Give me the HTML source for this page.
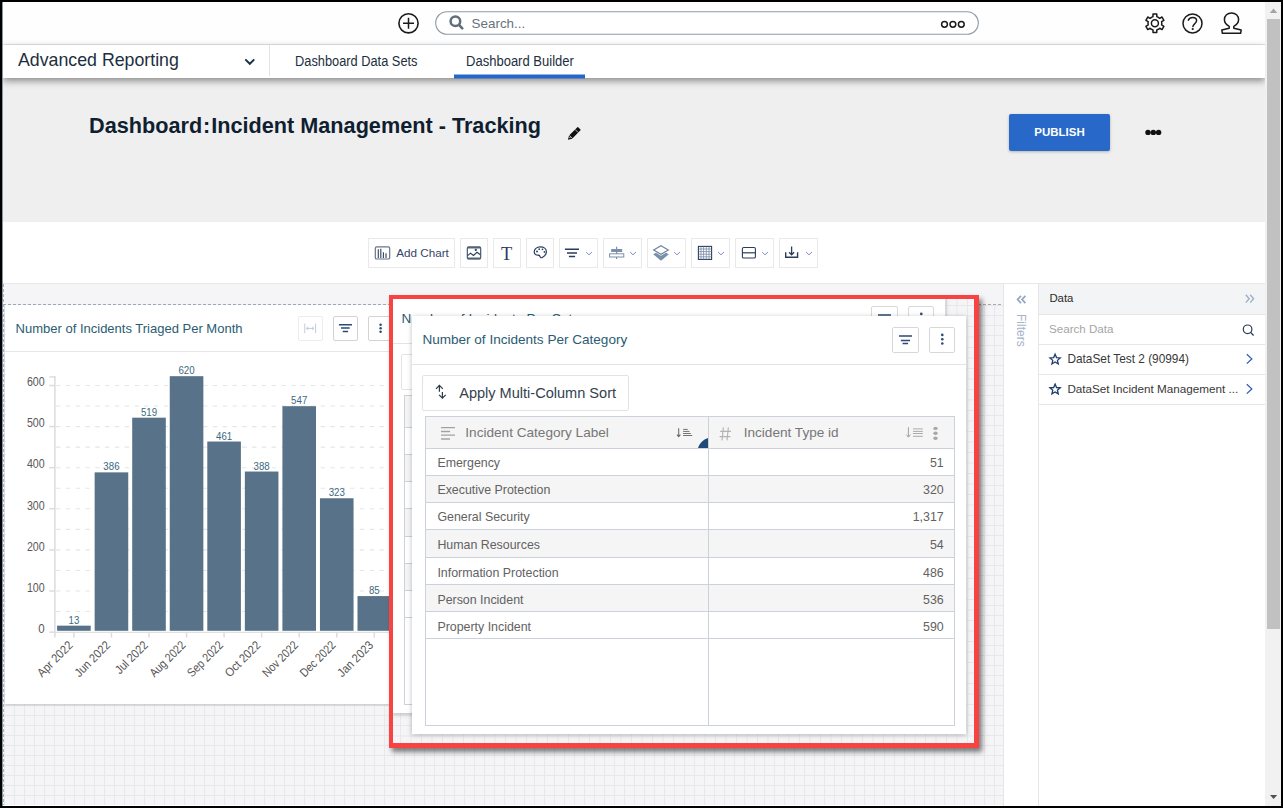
<!DOCTYPE html>
<html><head><meta charset="utf-8">
<style>
*{box-sizing:border-box;margin:0;padding:0}
html,body{width:1283px;height:808px;overflow:hidden;background:#000}
body{position:relative;font-family:"Liberation Sans",sans-serif}
.a{position:absolute}
.t{position:absolute;white-space:nowrap;line-height:1}
svg{position:absolute;overflow:visible}
</style></head><body>
<!-- page area -->
<div class="a" style="left:2px;top:2px;width:1279px;height:804px;background:#fff"></div>
<div class="a" style="left:2px;top:2px;width:1px;height:804px;background:#8497a6;z-index:20"></div>

<!-- top header -->
<div class="a" style="left:3px;top:2px;width:1262px;height:43px;background:#fefefe;border-bottom:1px solid #e2e6e9"></div>


<!-- header content -->
<svg style="left:0;top:0" width="1283" height="45">
 <circle cx="408.5" cy="23.3" r="9.6" fill="none" stroke="#1a1a1a" stroke-width="1.6"/>
 <path d="M403 23.3H414M408.5 17.8V28.8" stroke="#1a1a1a" stroke-width="1.5"/>
 <rect x="435.7" y="11.7" width="542.6" height="22.6" rx="11.3" fill="#fff" stroke="#8f9aa3" stroke-width="1.1"/>
 <circle cx="455.4" cy="21.3" r="4.8" fill="none" stroke="#5f6e7a" stroke-width="2.5"/>
 <path d="M459.2 25.1L462.3 28.4" stroke="#5f6e7a" stroke-width="2.6" stroke-linecap="round"/>
 <circle cx="944.5" cy="24.3" r="2.9" fill="none" stroke="#1a1a1a" stroke-width="1.5"/>
 <circle cx="952.9" cy="24.3" r="2.9" fill="none" stroke="#1a1a1a" stroke-width="1.5"/>
 <circle cx="961.3" cy="24.3" r="2.9" fill="none" stroke="#1a1a1a" stroke-width="1.5"/>
 <circle cx="1192.5" cy="23.4" r="9.5" fill="none" stroke="#1a1a1a" stroke-width="1.5"/>
 <path d="M1188.3 20.2C1189.3 18.2 1190.8 17.6 1192.6 17.6C1195 17.6 1196.6 19 1196.6 20.8C1196.6 22.9 1193.4 24 1192.9 26.6" fill="none" stroke="#1a1a1a" stroke-width="1.5" stroke-linecap="round"/>
 <circle cx="1192.7" cy="29" r="1.1" fill="#1a1a1a"/>
 <path d="M1229.2 26.3C1226.4 24.9 1224.4 22.3 1224.4 19.6C1224.4 15.8 1227.5 12.9 1231.5 12.9C1235.5 12.9 1238.6 15.8 1238.6 19.6C1238.6 22.3 1236.6 24.9 1233.8 26.3V28.2L1241.2 29.9L1240.6 33.3H1222.4L1221.8 29.9L1229.2 28.2Z" fill="none" stroke="#1a1a1a" stroke-width="1.5" stroke-linejoin="round"/>
 <path id="gear" fill="none" stroke="#1a1a1a" stroke-width="1.5" stroke-linejoin="round" d="M1151.45 17.32 L1152.97 16.67 L1153.02 13.99 L1156.78 13.99 L1156.83 16.67 L1158.35 17.32 L1159.68 18.32 L1162.03 17.02 L1163.90 20.27 L1161.60 21.65 L1161.80 23.30 L1161.60 24.95 L1163.90 26.33 L1162.03 29.58 L1159.68 28.28 L1158.35 29.28 L1156.83 29.93 L1156.78 32.61 L1153.02 32.61 L1152.97 29.93 L1151.45 29.28 L1150.12 28.28 L1147.77 29.58 L1145.90 26.33 L1148.20 24.95 L1148.00 23.30 L1148.20 21.65 L1145.90 20.27 L1147.77 17.02 L1150.12 18.32Z"/>
 <circle cx="1154.9" cy="23.3" r="3.5" fill="none" stroke="#1a1a1a" stroke-width="1.5"/>
</svg>
<div class="t" style="left:471.6px;top:16.5px;font-size:13.4px;color:#66737e">Search...</div>

<!-- nav -->
<div class="a" id="nav" style="left:3px;top:45px;width:1262px;height:33px;background:#fff;box-shadow:0 3px 7px rgba(0,0,0,.42);z-index:3"></div>

<!-- title area -->
<div class="a" style="left:3px;top:78px;width:1262px;height:144px;background:#efefef"></div>


<!-- nav content -->
<div class="t" style="left:18.4px;top:50.8px;font-size:18.1px;color:#1c2f40;z-index:4;transform-origin:0 0;transform:scaleX(0.981)">Advanced Reporting</div>
<svg style="left:0;top:0;z-index:4" width="600" height="80">
 <path d="M245.3 59.4L249.8 63.8L254.3 59.4" fill="none" stroke="#1c2f40" stroke-width="1.9"/>
 <rect x="269" y="45" width="1" height="31" fill="#e1e5e9"/>
 <rect x="454" y="74.5" width="131" height="4" fill="#2566c8"/>
</svg>
<div class="t" style="left:294.6px;top:54.1px;font-size:14px;color:#1c2f40;z-index:4;transform-origin:0 0;transform:scaleX(0.915)">Dashboard Data Sets</div>
<div class="t" style="left:465.8px;top:54.1px;font-size:14px;color:#1c2f40;z-index:4;transform-origin:0 0;transform:scaleX(0.93)">Dashboard Builder</div>

<!-- title content -->
<div class="t" style="left:89px;top:113.9px;font-size:22.8px;font-weight:bold;color:#0f1e30;transform-origin:0 0;transform:scaleX(0.95)">Dashboard<span style="margin:0 1px">:</span>Incident Management - Tracking</div>
<svg style="left:0;top:0" width="1283" height="222">
 <g transform="translate(567.9 139.8) rotate(-45)">
  <path d="M0 0L3.8 -2.2H15.6Q16.2 -2.2 16.2 -1.6V1.6Q16.2 2.2 15.6 2.2H3.8Z" fill="#111"/>
  <path d="M4.2 -2.2V2.2M12.4 -2.2V2.2" stroke="#efefef" stroke-width=".7"/>
  <path d="M2.2 -1.2L3.8 0.2" stroke="#ddd" stroke-width=".7"/>
 </g>
 <rect x="1009" y="114" width="101" height="37" rx="2" fill="#2868c8"/>
 <circle cx="1148" cy="132.4" r="2.7" fill="#111"/>
 <circle cx="1153.3" cy="132.4" r="2.7" fill="#111"/>
 <circle cx="1158.6" cy="132.4" r="2.7" fill="#111"/>
</svg>
<div class="a" style="left:1009px;top:114px;width:101px;height:37px;box-shadow:0 1px 3px rgba(0,0,0,.25);border-radius:2px"></div>
<div class="t" style="left:1009px;top:126.5px;width:101px;text-align:center;font-size:11.5px;font-weight:bold;color:#fff">PUBLISH</div>

<!-- toolbar -->
<div class="a" style="left:3px;top:222px;width:1262px;height:62px;background:#fff;border-bottom:1px solid #e8e8e8"></div>


<!-- toolbar content -->
<div class="a" style="left:368px;top:238px;width:87px;height:30px;border:1px solid #e9e9e9;background:#fff"></div>
<div class="a" style="left:460px;top:238px;width:28px;height:30px;border:1px solid #e9e9e9;background:#fff"></div>
<div class="a" style="left:493px;top:238px;width:28px;height:30px;border:1px solid #e9e9e9;background:#fff"></div>
<div class="a" style="left:526px;top:238px;width:28px;height:30px;border:1px solid #e9e9e9;background:#fff"></div>
<div class="a" style="left:559px;top:238px;width:39px;height:30px;border:1px solid #e9e9e9;background:#fff"></div>
<div class="a" style="left:603px;top:238px;width:39px;height:30px;border:1px solid #e9e9e9;background:#fff"></div>
<div class="a" style="left:647px;top:238px;width:39px;height:30px;border:1px solid #e9e9e9;background:#fff"></div>
<div class="a" style="left:691px;top:238px;width:39px;height:30px;border:1px solid #e9e9e9;background:#fff"></div>
<div class="a" style="left:735px;top:238px;width:39px;height:30px;border:1px solid #e9e9e9;background:#fff"></div>
<div class="a" style="left:779px;top:238px;width:39px;height:30px;border:1px solid #e9e9e9;background:#fff"></div>
<svg style="left:0;top:0" width="1283" height="284">
 <rect x="375.3" y="246.9" width="14.4" height="12.1" rx="1.6" fill="none" stroke="#66748a" stroke-width="1.2"/>
 <path d="M378.3 249.2V258M380.8 248.8V258M383.4 252.2V258M386 253.3V258" stroke="#3a4762" stroke-width="1.15"/>
 <rect x="467.3" y="247" width="13.4" height="11.9" rx="1.2" fill="none" stroke="#3a4a63" stroke-width="1.1"/>
 <path d="M467.6 247.5H480.4M467.6 258.4H480.4" stroke="#56647a" stroke-width="1.9"/>
 <path d="M467.6 255.6L470.5 253.2L473.5 255.5L477 252.3L480.4 254.8" fill="none" stroke="#2c3d5c" stroke-width="1.1"/>
 <circle cx="475.8" cy="249.9" r="1.1" fill="#2c3d5c"/>
 <path d="M540.3 246.8C536.6 246.8 534.2 249.3 534.2 252C534.2 254.6 536.5 255.3 538 255.2C539.6 255.1 540 256 540.4 257.2C540.8 258 541.8 257.8 542.6 257.3C545.2 255.8 546.4 253.8 546.4 251.7C546.4 248.8 543.8 246.8 540.3 246.8Z" fill="none" stroke="#2c3d5c" stroke-width="1.2"/>
 <circle cx="537" cy="251.5" r=".95" fill="#2c3d5c"/>
 <circle cx="539.2" cy="249.2" r=".85" fill="#2c3d5c"/>
 <circle cx="542.5" cy="249.3" r=".85" fill="#2c3d5c"/>
 <circle cx="544.4" cy="251.9" r=".85" fill="#2c3d5c"/>
 <path d="M564.9 249.3H579M567 253H577M568.9 256.6H575.1" stroke="#2c3d5c" stroke-width="1.5"/>
 <path d="M586.1 252L589 254.8L592 252" fill="none" stroke="#8090c8" stroke-width="1"/>
 <path d="M616.6 246.8V259" stroke="#7b8fa9" stroke-width="1.2"/>
 <rect x="611.2" y="249" width="11" height="3" fill="#7b8fa9"/>
 <rect x="609.6" y="253.8" width="14.2" height="3.2" fill="#fff" stroke="#7b8fa9" stroke-width="1"/>
 <path d="M630.1 252L633 254.8L636 252" fill="none" stroke="#8090c8" stroke-width="1"/>
 <path d="M661 245.8L668.3 250L661 254.2L653.7 250Z" fill="none" stroke="#6f84a0" stroke-width="1.2"/>
 <path d="M653.2 254.3L656 252.8L661 255.7L666 252.8L668.8 254.3L661 260.8Z" fill="#7890ab"/>
 <path d="M674.1 252L677 254.8L680 252" fill="none" stroke="#8090c8" stroke-width="1"/>
 <rect x="698.4" y="246.4" width="13.2" height="13" fill="none" stroke="#2c3d5c" stroke-width="1.1"/>
 <path d="M701 246.4V259.4M703.6 246.4V259.4M706.3 246.4V259.4M709 246.4V259.4M698.4 249H711.6M698.4 251.6H711.6M698.4 254.2H711.6M698.4 256.8H711.6" stroke="#56698a" stroke-width=".6"/>
 <path d="M718.1 252L721 254.8L724 252" fill="none" stroke="#8090c8" stroke-width="1"/>
 <rect x="742.4" y="247.5" width="13" height="10.5" rx="1.3" fill="none" stroke="#2c3d5c" stroke-width="1.1"/>
 <path d="M742.4 252.8H755.4" stroke="#2c3d5c" stroke-width="1.2"/>
 <path d="M762.1 252L765 254.8L768 252" fill="none" stroke="#8090c8" stroke-width="1"/>
 <path d="M785.7 252.2V257.3H797.6V252.2" fill="none" stroke="#2c3d5c" stroke-width="1.4"/>
 <path d="M791.6 246.4V254.5M789.1 252.2L791.6 254.8L794.1 252.2" fill="none" stroke="#2c3d5c" stroke-width="1.3"/>
 <path d="M806.1 252L809 254.8L812 252" fill="none" stroke="#8090c8" stroke-width="1"/>
</svg>
<div class="t" style="left:396.2px;top:247px;font-size:11.7px;color:#35456a">Add Chart</div>
<div class="t" style="left:501.1px;top:245px;font-family:'Liberation Serif';font-size:18.4px;color:#2c3d5c">T</div>

<!-- canvas -->
<div class="a" style="left:3px;top:284px;width:1000px;height:521px;background:#f5f5f7"></div>
<div class="a" id="grid" style="left:4px;top:305px;width:999px;height:500px;background-color:#f5f5f7;background-image:linear-gradient(to right,#e8e8ea 1px,transparent 1px),linear-gradient(to bottom,#e8e8ea 1px,transparent 1px);background-size:10px 10px"></div>
<div class="a" style="left:3px;top:304px;width:1000px;height:1px;background:repeating-linear-gradient(to right,#9eacbb 0 3px,transparent 3px 5px)"></div>
<div class="a" style="left:3px;top:284px;width:1px;height:521px;background:repeating-linear-gradient(to bottom,#a3b1c0 0 3px,#fff 3px 5px);z-index:5"></div>


<!-- left chart card -->
<div class="a" style="left:5px;top:305px;width:399px;height:398.5px;background:#fff;box-shadow:0 1px 2px rgba(0,0,0,.2)"></div>
<div class="a" style="left:5px;top:351px;width:395px;height:1px;background:#e6e6e6"></div>
<div class="t" style="left:15.6px;top:321.8px;font-size:13px;color:#2b5c72">Number of Incidents Triaged Per Month</div>
<div class="a" style="left:298px;top:316px;width:25px;height:25px;border:1px solid #ececec;border-radius:2px"></div>
<div class="a" style="left:333px;top:316px;width:25px;height:25px;border:1px solid #d3d3d3;border-radius:2px"></div>
<div class="a" style="left:368px;top:316px;width:25px;height:25px;border:1px solid #d3d3d3;border-radius:2px"></div>
<svg style="left:0;top:0" width="1283" height="808" font-family="Liberation Sans">
 <path d="M304.8 323.5V333.2M315.6 323.5V333.2M306.5 328.4H314M306.5 328.4L308.3 326.8M306.5 328.4L308.3 330M314 328.4L312.2 326.8M314 328.4L312.2 330" fill="none" stroke="#c3ccd8" stroke-width="1"/>
 <path d="M338.9 324.8H352M341 328H349.7M342.7 331.5H348.1" stroke="#2c4a73" stroke-width="1.5"/>
 <circle cx="380.6" cy="324.8" r="1.25" fill="#2c4a73"/><circle cx="380.6" cy="328.3" r="1.25" fill="#2c4a73"/><circle cx="380.6" cy="331.8" r="1.25" fill="#2c4a73"/>
 <path d="M56 611.55H400" stroke="#e6e6e6" stroke-width="1.1" stroke-dasharray="4.5 5.3"/>
 <path d="M56 591.00H400" stroke="#e6e6e6" stroke-width="1.1" stroke-dasharray="4.5 5.3"/>
 <path d="M56 570.45H400" stroke="#e6e6e6" stroke-width="1.1" stroke-dasharray="4.5 5.3"/>
 <path d="M56 549.90H400" stroke="#e6e6e6" stroke-width="1.1" stroke-dasharray="4.5 5.3"/>
 <path d="M56 529.35H400" stroke="#e6e6e6" stroke-width="1.1" stroke-dasharray="4.5 5.3"/>
 <path d="M56 508.80H400" stroke="#e6e6e6" stroke-width="1.1" stroke-dasharray="4.5 5.3"/>
 <path d="M56 488.25H400" stroke="#e6e6e6" stroke-width="1.1" stroke-dasharray="4.5 5.3"/>
 <path d="M56 467.70H400" stroke="#e6e6e6" stroke-width="1.1" stroke-dasharray="4.5 5.3"/>
 <path d="M56 447.15H400" stroke="#e6e6e6" stroke-width="1.1" stroke-dasharray="4.5 5.3"/>
 <path d="M56 426.60H400" stroke="#e6e6e6" stroke-width="1.1" stroke-dasharray="4.5 5.3"/>
 <path d="M56 406.05H400" stroke="#e6e6e6" stroke-width="1.1" stroke-dasharray="4.5 5.3"/>
 <path d="M56 385.50H400" stroke="#e6e6e6" stroke-width="1.1" stroke-dasharray="4.5 5.3"/>
 <path d="M54.9 376.3V637.6" stroke="#dcdcdc" stroke-width="1.5"/>
 <path d="M54.2 632.3H400" stroke="#e0e0e0" stroke-width="1.3"/>
 <path d="M49.2 376.9H55.5" stroke="#dcdcdc" stroke-width="1.4"/>
 <path d="M49.2 632.10H55" stroke="#dcdcdc" stroke-width="1.5"/>
 <text x="44.7" y="632.00" text-anchor="end" font-size="12.2" fill="#585858" dy="0.8" textLength="6.4" lengthAdjust="spacingAndGlyphs">0</text>
 <path d="M49.2 591.00H55" stroke="#dcdcdc" stroke-width="1.5"/>
 <text x="44.7" y="590.90" text-anchor="end" font-size="12.2" fill="#585858" dy="0.8" textLength="17.8" lengthAdjust="spacingAndGlyphs">100</text>
 <path d="M49.2 549.90H55" stroke="#dcdcdc" stroke-width="1.5"/>
 <text x="44.7" y="549.80" text-anchor="end" font-size="12.2" fill="#585858" dy="0.8" textLength="17.8" lengthAdjust="spacingAndGlyphs">200</text>
 <path d="M49.2 508.80H55" stroke="#dcdcdc" stroke-width="1.5"/>
 <text x="44.7" y="508.70" text-anchor="end" font-size="12.2" fill="#585858" dy="0.8" textLength="17.8" lengthAdjust="spacingAndGlyphs">300</text>
 <path d="M49.2 467.70H55" stroke="#dcdcdc" stroke-width="1.5"/>
 <text x="44.7" y="467.60" text-anchor="end" font-size="12.2" fill="#585858" dy="0.8" textLength="17.8" lengthAdjust="spacingAndGlyphs">400</text>
 <path d="M49.2 426.60H55" stroke="#dcdcdc" stroke-width="1.5"/>
 <text x="44.7" y="426.50" text-anchor="end" font-size="12.2" fill="#585858" dy="0.8" textLength="17.8" lengthAdjust="spacingAndGlyphs">500</text>
 <path d="M49.2 385.50H55" stroke="#dcdcdc" stroke-width="1.5"/>
 <text x="44.7" y="385.40" text-anchor="end" font-size="12.2" fill="#585858" dy="0.8" textLength="17.8" lengthAdjust="spacingAndGlyphs">600</text>
 <rect x="57.10" y="625.66" width="33.6" height="5.14" fill="#587389"/>
 <text x="73.90" y="623.66" text-anchor="middle" font-size="10.4" fill="#3d6a80" textLength="10.8" lengthAdjust="spacingAndGlyphs">13</text>
 <path d="M73.90 632.6V637.6" stroke="#dcdcdc" stroke-width="1.5"/>
 <text transform="translate(73.60 646) rotate(-45)" text-anchor="end" font-size="12.2" fill="#555" textLength="44.8" lengthAdjust="spacingAndGlyphs">Apr 2022</text>
 <rect x="94.65" y="472.35" width="33.6" height="158.45" fill="#587389"/>
 <text x="111.45" y="470.35" text-anchor="middle" font-size="10.4" fill="#3d6a80" textLength="16.2" lengthAdjust="spacingAndGlyphs">386</text>
 <path d="M111.45 632.6V637.6" stroke="#dcdcdc" stroke-width="1.5"/>
 <text transform="translate(111.15 646) rotate(-45)" text-anchor="end" font-size="12.2" fill="#555" textLength="44.8" lengthAdjust="spacingAndGlyphs">Jun 2022</text>
 <rect x="132.20" y="417.69" width="33.6" height="213.11" fill="#587389"/>
 <text x="149.00" y="415.69" text-anchor="middle" font-size="10.4" fill="#3d6a80" textLength="16.2" lengthAdjust="spacingAndGlyphs">519</text>
 <path d="M149.00 632.6V637.6" stroke="#dcdcdc" stroke-width="1.5"/>
 <text transform="translate(148.70 646) rotate(-45)" text-anchor="end" font-size="12.2" fill="#555" textLength="40.5" lengthAdjust="spacingAndGlyphs">Jul 2022</text>
 <rect x="169.75" y="376.18" width="33.6" height="254.62" fill="#587389"/>
 <text x="186.55" y="374.18" text-anchor="middle" font-size="10.4" fill="#3d6a80" textLength="16.2" lengthAdjust="spacingAndGlyphs">620</text>
 <path d="M186.55 632.6V637.6" stroke="#dcdcdc" stroke-width="1.5"/>
 <text transform="translate(186.25 646) rotate(-45)" text-anchor="end" font-size="12.2" fill="#555" textLength="44.8" lengthAdjust="spacingAndGlyphs">Aug 2022</text>
 <rect x="207.30" y="441.53" width="33.6" height="189.27" fill="#587389"/>
 <text x="224.10" y="439.53" text-anchor="middle" font-size="10.4" fill="#3d6a80" textLength="16.2" lengthAdjust="spacingAndGlyphs">461</text>
 <path d="M224.10 632.6V637.6" stroke="#dcdcdc" stroke-width="1.5"/>
 <text transform="translate(223.80 646) rotate(-45)" text-anchor="end" font-size="12.2" fill="#555" textLength="44.8" lengthAdjust="spacingAndGlyphs">Sep 2022</text>
 <rect x="244.85" y="471.53" width="33.6" height="159.27" fill="#587389"/>
 <text x="261.65" y="469.53" text-anchor="middle" font-size="10.4" fill="#3d6a80" textLength="16.2" lengthAdjust="spacingAndGlyphs">388</text>
 <path d="M261.65 632.6V637.6" stroke="#dcdcdc" stroke-width="1.5"/>
 <text transform="translate(261.35 646) rotate(-45)" text-anchor="end" font-size="12.2" fill="#555" textLength="44.8" lengthAdjust="spacingAndGlyphs">Oct 2022</text>
 <rect x="282.40" y="406.18" width="33.6" height="224.62" fill="#587389"/>
 <text x="299.20" y="404.18" text-anchor="middle" font-size="10.4" fill="#3d6a80" textLength="16.2" lengthAdjust="spacingAndGlyphs">547</text>
 <path d="M299.20 632.6V637.6" stroke="#dcdcdc" stroke-width="1.5"/>
 <text transform="translate(298.90 646) rotate(-45)" text-anchor="end" font-size="12.2" fill="#555" textLength="44.8" lengthAdjust="spacingAndGlyphs">Nov 2022</text>
 <rect x="319.95" y="498.25" width="33.6" height="132.55" fill="#587389"/>
 <text x="336.75" y="496.25" text-anchor="middle" font-size="10.4" fill="#3d6a80" textLength="16.2" lengthAdjust="spacingAndGlyphs">323</text>
 <path d="M336.75 632.6V637.6" stroke="#dcdcdc" stroke-width="1.5"/>
 <text transform="translate(336.45 646) rotate(-45)" text-anchor="end" font-size="12.2" fill="#555" textLength="44.8" lengthAdjust="spacingAndGlyphs">Dec 2022</text>
 <rect x="357.50" y="596.07" width="33.6" height="34.73" fill="#587389"/>
 <text x="374.30" y="594.07" text-anchor="middle" font-size="10.4" fill="#3d6a80" textLength="10.8" lengthAdjust="spacingAndGlyphs">85</text>
 <path d="M374.30 632.6V637.6" stroke="#dcdcdc" stroke-width="1.5"/>
 <text transform="translate(374.00 646) rotate(-45)" text-anchor="end" font-size="12.2" fill="#555" textLength="44.8" lengthAdjust="spacingAndGlyphs">Jan 2023</text>
</svg>

<!-- red highlight -->
<div class="a" style="left:389px;top:295px;width:590px;height:453px;box-shadow:3px 4px 5px rgba(0,0,0,.5)"></div>
<div class="a" style="left:393px;top:299px;width:581px;height:444px;overflow:hidden;background-color:#f5f5f7;background-image:linear-gradient(to right,#e8e8ea 1px,transparent 1px),linear-gradient(to bottom,#e8e8ea 1px,transparent 1px);background-size:10.5px 10.5px;background-position:7.0px 6.0px">
 <div class="a" style="left:-393px;top:-299px;width:1283px;height:808px">
<div class="a" style="left:391px;top:296px;width:554px;height:417px;background:#fff;box-shadow:0 1px 5px rgba(0,0,0,.25);">
 <div class="t" style="left:10.4px;top:16.38px;font-size:13.55px;color:#2b5c72">Number of Incidents Per Category</div>
 <div class="a" style="left:0;top:47px;width:554px;height:1px;background:#e4e4e4"></div>
 <div class="a" style="left:480px;top:10px;width:27px;height:26px;border:1px solid #d8d8d8;border-radius:2px"></div>
 <div class="a" style="left:517px;top:10px;width:26px;height:26px;border:1px solid #d8d8d8;border-radius:2px"></div>
 <svg style="left:0;top:0" width="554" height="417">
  <path d="M487 18.9H500M488.9 23.5H498M490.6 26.6H496.1" stroke="#2c4a73" stroke-width="1.5"/>
  <circle cx="530.3" cy="17.9" r="1.3" fill="#2c4a73"/><circle cx="530.3" cy="22.2" r="1.3" fill="#2c4a73"/><circle cx="530.3" cy="26.5" r="1.3" fill="#2c4a73"/>
 </svg>
 <div class="a" style="left:10px;top:58px;width:207px;height:36px;border:1px solid #e3e3e3;border-radius:2px;background:#fff"></div>
 <svg style="left:0;top:0" width="554" height="417">
  <path d="M27.4 68.6V74.7M24 71.8L27.4 68.4L30.8 71.8M30.4 74.9V80.6M27.1 77.9L30.4 81.1L33.7 77.9" fill="none" stroke="#2a3a48" stroke-width="1.2"/>
 </svg>
 <div class="t" style="left:47.2px;top:68.93px;font-size:14.55px;color:#34424f">Apply Multi-Column Sort</div>
 <div class="a" style="left:13px;top:99px;width:530px;height:310px;border:1px solid #cbd2db;background:#fff;overflow:hidden">
  <div class="a" style="left:0;top:0;width:100%;height:32px;background:#f5f5f5;border-bottom:1px solid #cbd2db"></div>
  <div class="a" style="left:0;top:32px;width:100%;height:27px;background:#fff;border-bottom:1px solid #cbd2db"></div>
  <div class="t" style="left:11.4px;top:40.26px;font-size:12.4px;color:#626262">Emergency</div>
  <div class="t" style="right:10.3px;top:40.26px;font-size:12.4px;color:#626262;text-align:right">51</div>
  <div class="a" style="left:0;top:59px;width:100%;height:27px;background:#f5f5f5;border-bottom:1px solid #cbd2db"></div>
  <div class="t" style="left:11.4px;top:67.26px;font-size:12.4px;color:#626262">Executive Protection</div>
  <div class="t" style="right:10.3px;top:67.26px;font-size:12.4px;color:#626262;text-align:right">320</div>
  <div class="a" style="left:0;top:86px;width:100%;height:27px;background:#fff;border-bottom:1px solid #cbd2db"></div>
  <div class="t" style="left:11.4px;top:94.26px;font-size:12.4px;color:#626262">General Security</div>
  <div class="t" style="right:10.3px;top:94.26px;font-size:12.4px;color:#626262;text-align:right">1,317</div>
  <div class="a" style="left:0;top:113px;width:100%;height:28px;background:#f5f5f5;border-bottom:1px solid #cbd2db"></div>
  <div class="t" style="left:11.4px;top:121.56px;font-size:12.4px;color:#626262">Human Resources</div>
  <div class="t" style="right:10.3px;top:121.56px;font-size:12.4px;color:#626262;text-align:right">54</div>
  <div class="a" style="left:0;top:141px;width:100%;height:27px;background:#fff;border-bottom:1px solid #cbd2db"></div>
  <div class="t" style="left:11.4px;top:149.56px;font-size:12.4px;color:#626262">Information Protection</div>
  <div class="t" style="right:10.3px;top:149.56px;font-size:12.4px;color:#626262;text-align:right">486</div>
  <div class="a" style="left:0;top:168px;width:100%;height:27px;background:#f5f5f5;border-bottom:1px solid #cbd2db"></div>
  <div class="t" style="left:11.4px;top:176.56px;font-size:12.4px;color:#626262">Person Incident</div>
  <div class="t" style="right:10.3px;top:176.56px;font-size:12.4px;color:#626262;text-align:right">536</div>
  <div class="a" style="left:0;top:195px;width:100%;height:27px;background:#fff;border-bottom:1px solid #cbd2db"></div>
  <div class="t" style="left:11.4px;top:203.56px;font-size:12.4px;color:#626262">Property Incident</div>
  <div class="t" style="right:10.3px;top:203.56px;font-size:12.4px;color:#626262;text-align:right">590</div>
  <div class="a" style="left:282px;top:0;width:1px;height:100%;background:#cbd2db"></div>
  <div class="t" style="left:39.3px;top:8.94px;font-size:13.6px;color:#777">Incident Category Label</div>
  <div class="t" style="left:317.7px;top:8.94px;font-size:13.6px;color:#777">Incident Type id</div>
  <svg style="left:0;top:0" width="530" height="310">
   <path d="M15 10.7H29M15 14.5H24.1M15 18.2H29M15 22H24" stroke="#a2a2a2" stroke-width="1.3"/>
   <path d="M252.7 11.2V19.4M251 17.6L252.7 19.7L254.4 17.6" fill="none" stroke="#6a6a6a" stroke-width="1.05"/>
   <path d="M257.1 12.4H261.7M257.1 14.4H263.5M257.1 16.5H264.8M257.1 18.5H266.2" fill="none" stroke="#6a6a6a" stroke-width=".95"/>
   <path d="M282 31H272A16 16 0 0 1 282 21Z" fill="#1f4a78"/>
   <path d="M297.4 10.4L296 23.4M302.4 10.4L301 23.4M294.2 14.4H305M293.6 19.6H304.4" stroke="#b2b2b2" stroke-width="1.1"/>
   <path d="M482.4 10.2V19.6M480.4 17.6L482.4 20.2L484.4 17.6" fill="none" stroke="#a0a0a0" stroke-width="1"/>
   <path d="M487 11.9H496.8M487 14.4H496.8M487 16.5H496.8M487 19.3H496.8" fill="none" stroke="#ababab" stroke-width="1"/>
   <ellipse cx="509.5" cy="11.4" rx="2.2" ry="1.7" fill="#a8a8a8"/><ellipse cx="509.5" cy="16.3" rx="2.2" ry="1.7" fill="#a8a8a8"/><ellipse cx="509.5" cy="21.2" rx="2.2" ry="1.7" fill="#a8a8a8"/>
  </svg>
 </div>
</div>

<div class="a" style="left:412px;top:316px;width:554px;height:418px;background:#fff;box-shadow:0 1px 5px rgba(0,0,0,.25);"></div>
<div class="a" style="left:412px;top:317px;width:554px;height:417px;background:#fff;">
 <div class="t" style="left:10.4px;top:16.38px;font-size:13.55px;color:#2b5c72">Number of Incidents Per Category</div>
 <div class="a" style="left:0;top:47px;width:554px;height:1px;background:#e4e4e4"></div>
 <div class="a" style="left:480px;top:10px;width:27px;height:26px;border:1px solid #d8d8d8;border-radius:2px"></div>
 <div class="a" style="left:517px;top:10px;width:26px;height:26px;border:1px solid #d8d8d8;border-radius:2px"></div>
 <svg style="left:0;top:0" width="554" height="417">
  <path d="M487 18.9H500M488.9 23.5H498M490.6 26.6H496.1" stroke="#2c4a73" stroke-width="1.5"/>
  <circle cx="530.3" cy="17.9" r="1.3" fill="#2c4a73"/><circle cx="530.3" cy="22.2" r="1.3" fill="#2c4a73"/><circle cx="530.3" cy="26.5" r="1.3" fill="#2c4a73"/>
 </svg>
 <div class="a" style="left:10px;top:58px;width:207px;height:36px;border:1px solid #e3e3e3;border-radius:2px;background:#fff"></div>
 <svg style="left:0;top:0" width="554" height="417">
  <path d="M27.4 68.6V74.7M24 71.8L27.4 68.4L30.8 71.8M30.4 74.9V80.6M27.1 77.9L30.4 81.1L33.7 77.9" fill="none" stroke="#2a3a48" stroke-width="1.2"/>
 </svg>
 <div class="t" style="left:47.2px;top:68.93px;font-size:14.55px;color:#34424f">Apply Multi-Column Sort</div>
 <div class="a" style="left:13px;top:99px;width:530px;height:310px;border:1px solid #cbd2db;background:#fff;overflow:hidden">
  <div class="a" style="left:0;top:0;width:100%;height:32px;background:#f5f5f5;border-bottom:1px solid #cbd2db"></div>
  <div class="a" style="left:0;top:32px;width:100%;height:27px;background:#fff;border-bottom:1px solid #cbd2db"></div>
  <div class="t" style="left:11.4px;top:40.26px;font-size:12.4px;color:#626262">Emergency</div>
  <div class="t" style="right:10.3px;top:40.26px;font-size:12.4px;color:#626262;text-align:right">51</div>
  <div class="a" style="left:0;top:59px;width:100%;height:27px;background:#f5f5f5;border-bottom:1px solid #cbd2db"></div>
  <div class="t" style="left:11.4px;top:67.26px;font-size:12.4px;color:#626262">Executive Protection</div>
  <div class="t" style="right:10.3px;top:67.26px;font-size:12.4px;color:#626262;text-align:right">320</div>
  <div class="a" style="left:0;top:86px;width:100%;height:27px;background:#fff;border-bottom:1px solid #cbd2db"></div>
  <div class="t" style="left:11.4px;top:94.26px;font-size:12.4px;color:#626262">General Security</div>
  <div class="t" style="right:10.3px;top:94.26px;font-size:12.4px;color:#626262;text-align:right">1,317</div>
  <div class="a" style="left:0;top:113px;width:100%;height:28px;background:#f5f5f5;border-bottom:1px solid #cbd2db"></div>
  <div class="t" style="left:11.4px;top:121.56px;font-size:12.4px;color:#626262">Human Resources</div>
  <div class="t" style="right:10.3px;top:121.56px;font-size:12.4px;color:#626262;text-align:right">54</div>
  <div class="a" style="left:0;top:141px;width:100%;height:27px;background:#fff;border-bottom:1px solid #cbd2db"></div>
  <div class="t" style="left:11.4px;top:149.56px;font-size:12.4px;color:#626262">Information Protection</div>
  <div class="t" style="right:10.3px;top:149.56px;font-size:12.4px;color:#626262;text-align:right">486</div>
  <div class="a" style="left:0;top:168px;width:100%;height:27px;background:#f5f5f5;border-bottom:1px solid #cbd2db"></div>
  <div class="t" style="left:11.4px;top:176.56px;font-size:12.4px;color:#626262">Person Incident</div>
  <div class="t" style="right:10.3px;top:176.56px;font-size:12.4px;color:#626262;text-align:right">536</div>
  <div class="a" style="left:0;top:195px;width:100%;height:27px;background:#fff;border-bottom:1px solid #cbd2db"></div>
  <div class="t" style="left:11.4px;top:203.56px;font-size:12.4px;color:#626262">Property Incident</div>
  <div class="t" style="right:10.3px;top:203.56px;font-size:12.4px;color:#626262;text-align:right">590</div>
  <div class="a" style="left:282px;top:0;width:1px;height:100%;background:#cbd2db"></div>
  <div class="t" style="left:39.3px;top:8.94px;font-size:13.6px;color:#777">Incident Category Label</div>
  <div class="t" style="left:317.7px;top:8.94px;font-size:13.6px;color:#777">Incident Type id</div>
  <svg style="left:0;top:0" width="530" height="310">
   <path d="M15 10.7H29M15 14.5H24.1M15 18.2H29M15 22H24" stroke="#a2a2a2" stroke-width="1.3"/>
   <path d="M252.7 11.2V19.4M251 17.6L252.7 19.7L254.4 17.6" fill="none" stroke="#6a6a6a" stroke-width="1.05"/>
   <path d="M257.1 12.4H261.7M257.1 14.4H263.5M257.1 16.5H264.8M257.1 18.5H266.2" fill="none" stroke="#6a6a6a" stroke-width=".95"/>
   <path d="M282 31H272A16 16 0 0 1 282 21Z" fill="#1f4a78"/>
   <path d="M297.4 10.4L296 23.4M302.4 10.4L301 23.4M294.2 14.4H305M293.6 19.6H304.4" stroke="#b2b2b2" stroke-width="1.1"/>
   <path d="M482.4 10.2V19.6M480.4 17.6L482.4 20.2L484.4 17.6" fill="none" stroke="#a0a0a0" stroke-width="1"/>
   <path d="M487 11.9H496.8M487 14.4H496.8M487 16.5H496.8M487 19.3H496.8" fill="none" stroke="#ababab" stroke-width="1"/>
   <ellipse cx="509.5" cy="11.4" rx="2.2" ry="1.7" fill="#a8a8a8"/><ellipse cx="509.5" cy="16.3" rx="2.2" ry="1.7" fill="#a8a8a8"/><ellipse cx="509.5" cy="21.2" rx="2.2" ry="1.7" fill="#a8a8a8"/>
  </svg>
 </div>
</div>

 </div>
</div>
<div class="a" style="left:389px;top:295px;width:590px;height:453px;border-style:solid;border-color:#f94343;border-width:4px 5px 5px 4px"></div>

<!-- side panels -->
<div class="a" style="left:1003px;top:284px;width:36px;height:522px;background:#fff;border-left:1px solid #e6e6e6;border-right:1px solid #e6e6e6"></div>
<div class="a" style="left:1039px;top:284px;width:226px;height:31px;background:#f3f4f6;border-bottom:1px solid #e6e6e6"></div>
<div class="a" style="left:1039px;top:315px;width:226px;height:30px;background:#fff;border-bottom:1px solid #e6e6e6"></div>
<div class="a" style="left:1039px;top:345px;width:226px;height:30px;background:#fff;border-bottom:1px solid #e6e6e6"></div>
<div class="a" style="left:1039px;top:375px;width:226px;height:30px;background:#fff;border-bottom:1px solid #e6e6e6"></div>


<!-- side content -->
<svg style="left:0;top:0" width="1283" height="808">
 <path d="M1021 295.8L1017.6 299.5L1021 303.2M1025.4 295.8L1022 299.5L1025.4 303.2" fill="none" stroke="#93a6be" stroke-width="1.7"/>
 <path d="M1245.8 294.8L1249.2 298.7L1245.8 302.6M1250.2 294.8L1253.6 298.7L1250.2 302.6" fill="none" stroke="#9fb0c6" stroke-width="1.4"/>
 <circle cx="1247.6" cy="329.3" r="4.3" fill="none" stroke="#2a3a55" stroke-width="1.2"/>
 <path d="M1250.6 332.4L1253.6 335.5" stroke="#2a3a55" stroke-width="1.3"/>
 <path d="M1246.8 354.2L1251.8 358.9L1246.8 363.6" fill="none" stroke="#2f5cb8" stroke-width="1.3"/>
 <path d="M1246.8 384.2L1251.8 388.9L1246.8 393.6" fill="none" stroke="#2f5cb8" stroke-width="1.3"/>
 <path id="star1" d="M1055.10 354.20 L1056.54 357.62 L1060.24 357.93 L1057.43 360.36 L1058.27 363.97 L1055.10 362.05 L1051.93 363.97 L1052.77 360.36 L1049.96 357.93 L1053.66 357.62Z" fill="none" stroke="#1f3d6e" stroke-width="1.3" stroke-linejoin="miter"/>
 <path id="star2" d="M1055.10 384.10 L1056.54 387.52 L1060.24 387.83 L1057.43 390.26 L1058.27 393.87 L1055.10 391.95 L1051.93 393.87 L1052.77 390.26 L1049.96 387.83 L1053.66 387.52Z" fill="none" stroke="#1f3d6e" stroke-width="1.3" stroke-linejoin="miter"/>
</svg>
<div class="t" style="left:1015.2px;top:314px;font-size:12px;color:#a5b4c7;transform-origin:0 0;transform:translate(12px,0) rotate(90deg)">Filters</div>
<div class="t" style="left:1049.4px;top:293.3px;font-size:11.4px;color:#2b2b2b">Data</div>
<div class="t" style="left:1049px;top:323.3px;font-size:11.6px;color:#a5a5a5">Search Data</div>
<div class="t" style="left:1067.4px;top:353.6px;font-size:11.85px;color:#383838">DataSet Test 2 (90994)</div>
<div class="t" style="left:1067.4px;top:383.2px;font-size:11.7px;color:#383838">DataSet Incident Management ...</div>

<!-- scrollbar -->
<div class="a" style="left:1265px;top:2px;width:16px;height:804px;background:#f1f1f1;z-index:10"></div>
<div class="a" style="left:1267px;top:19px;width:13px;height:610px;background:#c1c1c1;z-index:10"></div>
<svg style="left:0;top:0;z-index:11" width="1283" height="808">
 <path d="M1269.8 13H1277.2L1273.5 8.6Z" fill="#a3a3a3"/>
 <path d="M1270 795H1277.2L1273.6 799Z" fill="#505050"/>
</svg>

</body></html>
